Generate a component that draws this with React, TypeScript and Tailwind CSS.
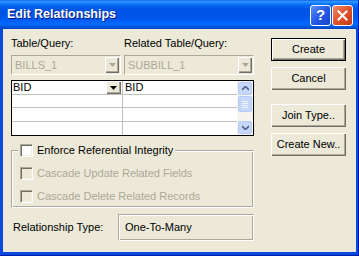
import React from "react"

function Check({ disabled }: { disabled?: boolean }) {
  return (
    <div
      className={`h-[13px] w-[13px] shrink-0 border border-t-[#ACA899] border-l-[#ACA899] border-r-white border-b-white shadow-[inset_1px_1px_#716F64,inset_-1px_-1px_#F1EFE2] ${
        disabled ? "bg-[#ECE9D8]" : "bg-white"
      }`}
    />
  )
}

function Btn({ label, def }: { label: string; def?: boolean }) {
  return (
    <div
      className={`flex h-[23px] w-[75px] items-center justify-center bg-[#ECE9D8] text-[11px] text-black ${
        def
          ? "border border-black shadow-[inset_1px_1px_#fff,inset_-1px_-1px_#716F64,inset_-2px_-2px_#ACA899]"
          : "shadow-[inset_1px_1px_#fff,inset_-1px_-1px_#716F64,inset_-2px_-2px_#ACA899]"
      }`}
    >
      {label}
    </div>
  )
}

function DownArrow({ color }: { color: string }) {
  return (
    <svg width="7" height="4" viewBox="0 0 7 4">
      <path d="M0 0h7L3.5 4z" fill={color} />
    </svg>
  )
}

function Combo({ text }: { text: string }) {
  return (
    <div className="flex h-[20px] items-center border border-t-[#ACA899] border-l-[#ACA899] border-r-white border-b-white bg-[#ECE9D8]">
      <div className="flex-1 pl-[3px] text-[11px] text-[#ACA899]">{text}</div>
      <div className="mr-[1px] flex h-[16px] w-[14px] items-center justify-center bg-[#ECE9D8] shadow-[inset_1px_1px_#fff,inset_-1px_-1px_#716F64,inset_-2px_-2px_#ACA899]">
        <DownArrow color="#ACA899" />
      </div>
    </div>
  )
}

function ScrollBar() {
  return (
    <div className="flex w-[16px] flex-col bg-[#F5F4EF]">
      <div className="m-px flex h-[13px] items-center justify-center rounded-[2px] border border-[#B9CBF3] bg-[#C6D6FB]">
        <svg width="7" height="5" viewBox="0 0 7 5">
          <path d="M0 4l3.5-3.5L7 4" stroke="#4D6185" strokeWidth="1.6" fill="none" />
        </svg>
      </div>
      <div className="mx-px flex h-[16px] flex-col items-center justify-center gap-[1px] rounded-[2px] border border-[#B9CBF3] bg-[#C6D6FB]">
        <div className="h-px w-[6px] bg-[#EEF4FE]" />
        <div className="h-px w-[6px] bg-[#EEF4FE]" />
        <div className="h-px w-[6px] bg-[#EEF4FE]" />
        <div className="h-px w-[6px] bg-[#EEF4FE]" />
      </div>
      <div className="flex-1" />
      <div className="m-px flex h-[13px] items-center justify-center rounded-[2px] border border-[#B9CBF3] bg-[#C6D6FB]">
        <svg width="7" height="5" viewBox="0 0 7 5">
          <path d="M0 1l3.5 3.5L7 1" stroke="#4D6185" strokeWidth="1.6" fill="none" />
        </svg>
      </div>
    </div>
  )
}

function Grid() {
  const rows = [0, 1, 2, 3]
  return (
    <div className="mt-[5px] flex h-[56px] border border-black bg-white">
      <div className="flex flex-1 flex-col">
        {rows.map((r) => (
          <div
            key={r}
            className={`grid h-[14px] grid-cols-[111px_1fr] text-[11px] text-black ${
              r < 3 ? "border-b border-[#C0C0C0]" : ""
            }`}
          >
            <div className="flex items-center border-r border-[#C0C0C0] pl-[1px]">
              {r === 0 && (
                <>
                  <span className="flex-1 leading-none">BID</span>
                  <div className="mr-[1px] flex h-[13px] w-[15px] items-center justify-center bg-[#ECE9D8] shadow-[inset_1px_1px_#fff,inset_-1px_-1px_#716F64,inset_-2px_-2px_#ACA899]">
                    <DownArrow color="#000" />
                  </div>
                </>
              )}
            </div>
            <div className="flex items-center pl-[2px] leading-none">{r === 0 ? "BID" : ""}</div>
          </div>
        ))}
      </div>
      <ScrollBar />
    </div>
  )
}

export default function App() {
  return (
    <div className="flex h-[256px] w-[359px] flex-col overflow-hidden border-r border-b border-[#001CA8] bg-[#0847E0] font-['Liberation_Sans',Arial,sans-serif]">
      <div className="flex h-[29px] shrink-0 items-center bg-[linear-gradient(to_bottom,#0058EE_0%,#3593FF_4%,#288EFF_8%,#127DFF_12%,#036FFC_16%,#0262EE_22%,#0057E5_30%,#0054E3_40%,#0055EB_60%,#005BF5_70%,#026AFE_80%,#0062EF_88%,#0052D6_94%,#0044C0_100%)] pl-[7px] pr-[5px]">
        <div className="flex-1 text-[12.5px] font-bold text-white [text-shadow:1px_1px_#0A1883]">
          Edit Relationships
        </div>
        <div className="flex items-center gap-[1px] pt-[1px]">
          <div className="flex h-[21px] w-[21px] items-center justify-center rounded-[3px] border border-white bg-[linear-gradient(135deg,#5C8FF8,#2559E8_50%,#1942C9)] text-[15px] font-bold text-white">
            ?
          </div>
          <div className="flex h-[21px] w-[21px] items-center justify-center rounded-[3px] border border-white bg-[linear-gradient(135deg,#EE8B6A,#E0532A_50%,#C63A12)]">
            <svg width="11" height="11" viewBox="0 0 11 11">
              <path d="M1.5 1.5l8 8M9.5 1.5l-8 8" stroke="#fff" strokeWidth="2" strokeLinecap="square" />
            </svg>
          </div>
        </div>
      </div>
      <div className="flex flex-1 pb-[3px] pl-[3px] pr-[2px]">
        <div className="flex flex-1 bg-[#ECE9D8] pl-[8px] pr-[10px] pt-[8px]">
          <div className="flex w-[243px] flex-col">
            <div className="grid h-[13px] grid-cols-[113px_1fr] text-[11px] leading-[13px] text-black">
              <div>Table/Query:</div>
              <div>Related Table/Query:</div>
            </div>
            <div className="mt-[5px] grid grid-cols-[110px_1fr] gap-[3px]">
              <Combo text="BILLS_1" />
              <Combo text="SUBBILL_1" />
            </div>
            <Grid />
            <div className="mt-[14px] h-[58px] border border-t-[#ACA899] border-l-[#ACA899] border-r-white border-b-white shadow-[inset_1px_1px_#fff,inset_-1px_-1px_#ACA899]">
              <div className="-mt-[7px] ml-[6px] flex w-fit items-center gap-[4px] bg-[#ECE9D8] px-[2px] text-[11px] leading-[13px] text-black">
                <Check />
                <span>Enforce Referential Integrity</span>
              </div>
              <div className="ml-[8px] mt-[10px] flex items-center gap-[4px] text-[11px] leading-[13px] text-[#ACA899]">
                <Check disabled />
                <span>Cascade Update Related Fields</span>
              </div>
              <div className="ml-[8px] mt-[10px] flex items-center gap-[4px] text-[11px] leading-[13px] text-[#ACA899]">
                <Check disabled />
                <span>Cascade Delete Related Records</span>
              </div>
            </div>
            <div className="mt-[6px] flex items-center">
              <div className="w-[107px] pl-[2px] text-[11px] text-black">Relationship Type:</div>
              <div className="flex h-[27px] flex-1 items-center border border-t-[#ACA899] border-l-[#ACA899] border-r-white border-b-white pl-[6px] text-[11px] text-black shadow-[inset_1px_1px_#fff,inset_-1px_-1px_#ACA899]">
                One-To-Many
              </div>
            </div>
          </div>
          <div className="ml-[17px] flex flex-col pt-[1px]">
            <Btn label="Create" def />
            <div className="mt-[6px]">
              <Btn label="Cancel" />
            </div>
            <div className="mt-[14px]">
              <Btn label="Join Type.." />
            </div>
            <div className="mt-[6px]">
              <Btn label="Create New.." />
            </div>
          </div>
        </div>
      </div>
    </div>
  )
}
